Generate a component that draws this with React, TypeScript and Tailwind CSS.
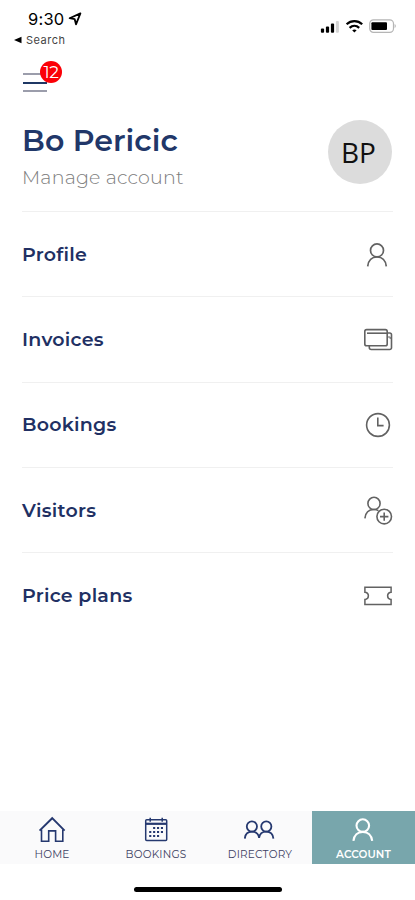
import React from 'react';
import clsx from 'clsx';

type IconProps = { className?: string };

const ProfileIcon: React.FC<IconProps> = ({ className }) => (
  <svg viewBox="0 0 30 30" fill="none" stroke="currentColor" strokeWidth="1.7" className={className}>
    <circle cx="14" cy="10.4" r="6.5" />
    <path d="M4.7 26.3C5.3 20.6 9 16.9 14 16.9s8.7 3.7 9.3 9.4" />
  </svg>
);

const InvoicesIcon: React.FC<IconProps> = ({ className }) => (
  <svg viewBox="0 0 30 30" fill="none" stroke="currentColor" strokeWidth="1.6" className={className}>
    <rect x="1.8" y="4.6" width="22.4" height="16.2" rx="1.8" />
    <path d="M4 8.2h20.2" />
    <path d="M24.3 8h2.4a1.8 1.8 0 0 1 1.8 1.8v12.9a1.8 1.8 0 0 1-1.8 1.8H8.3a2 2 0 0 1-2-2v-1.7" />
    <path d="M25 12h2.2v2" strokeWidth="1" />
  </svg>
);

const ClockIcon: React.FC<IconProps> = ({ className }) => (
  <svg viewBox="0 0 30 30" fill="none" stroke="currentColor" strokeWidth="1.6" className={className}>
    <circle cx="15" cy="15" r="11.4" />
    <path d="M14.8 7.6v8h5.8" />
  </svg>
);

const VisitorsIcon: React.FC<IconProps> = ({ className }) => (
  <svg viewBox="0 0 30 30" fill="none" stroke="currentColor" strokeWidth="1.6" className={className}>
    <circle cx="11" cy="7.4" r="6.1" />
    <path d="M1.9 22.4c.5-5.3 3.8-8.9 9.1-8.9 1.8 0 3.2.4 4.4 1.2" />
    <circle cx="21.2" cy="20.6" r="7.3" />
    <path d="M21.2 16.4v8.4M17 20.6h8.4" />
  </svg>
);

const TicketIcon: React.FC<IconProps> = ({ className }) => (
  <svg viewBox="0 0 30 30" fill="none" stroke="currentColor" strokeWidth="1.5" className={className}>
    <path d="M1.9 6.2h26.2v5.1h-.5a3.6 3.6 0 0 0 0 7.1h.5v5.1H1.9v-5.1h.5a3.6 3.6 0 0 0 0-7.1h-.5z" />
  </svg>
);

const HomeIcon: React.FC<IconProps> = ({ className }) => (
  <svg viewBox="0 0 32 28" fill="none" stroke="currentColor" strokeWidth="1.6" className={className}>
    <path d="M3.6 15.6 16.2 3.2l12.4 12.4" strokeWidth="1.9" />
    <path d="M5.5 14.4v11.9h7.2V15.9h6.9v10.4h7.2V14.4" />
  </svg>
);

const CalendarIcon: React.FC<IconProps> = ({ className }) => (
  <svg viewBox="0 0 32 28" fill="none" stroke="currentColor" strokeWidth="1.5" className={className}>
    <rect x="5.7" y="4.8" width="21" height="20.6" rx="1" />
    <path d="M5.7 8.8h21" strokeWidth="2.2" />
    <path d="M10.2 2.8v4M22.2 2.8v4" />
    <path d="M13.1 13h9.9M9.2 17h13.8M9.2 21h9.9" strokeWidth="1.9" strokeDasharray="2.1 1.8" />
  </svg>
);

const DirectoryIcon: React.FC<IconProps> = ({ className }) => (
  <svg viewBox="0 0 32 28" fill="none" stroke="currentColor" strokeWidth="1.8" className={className}>
    <circle cx="7.9" cy="11.5" r="5.1" />
    <circle cx="22.3" cy="11.5" r="5.1" />
    <path d="M.8 23.6c.4-4.3 3.1-7 7.1-7s6.7 2.7 7.2 6.2c.5-3.5 3.2-6.2 7.2-6.2s6.7 2.7 7.1 7" />
  </svg>
);

const AccountIcon: React.FC<IconProps> = ({ className }) => (
  <svg viewBox="0 0 32 28" fill="none" stroke="currentColor" strokeWidth="2.1" className={className}>
    <circle cx="14.8" cy="10.6" r="6.3" />
    <path d="M5.4 25.8c.6-5.4 4.4-8.9 9.4-8.9s8.8 3.5 9.4 8.9" />
  </svg>
);

const menuItems = [
  { label: 'Profile', icon: ProfileIcon },
  { label: 'Invoices', icon: InvoicesIcon },
  { label: 'Bookings', icon: ClockIcon },
  { label: 'Visitors', icon: VisitorsIcon },
  { label: 'Price plans', icon: TicketIcon },
];

const tabs = [
  { label: 'HOME', icon: HomeIcon },
  { label: 'BOOKINGS', icon: CalendarIcon },
  { label: 'DIRECTORY', icon: DirectoryIcon },
  { label: 'ACCOUNT', icon: AccountIcon, active: true },
];

const StatusBar: React.FC = () => (
  <div className="flex h-[50px] shrink-0 items-start justify-between pl-[14px] pr-[18px] pt-[9px] font-['Inter',sans-serif] text-black">
    <div>
      <div className="flex items-center gap-[4px] pl-[14px]">
        <span className="text-[16.5px] leading-[20px] tracking-[0.2px]">9:30</span>
        <svg viewBox="0 0 14 14" className="h-[14px] w-[14px]" fill="none" stroke="currentColor" strokeWidth="1.8" strokeLinejoin="round">
          <path d="M12.4 1.4 1.6 6.2l5.1 1 1.3 5.1z" />
        </svg>
      </div>
      <div className="flex items-center gap-[4px] pt-[1px] text-[#444]">
        <svg viewBox="0 0 8 8" className="h-2 w-2" fill="#000">
          <path d="M0 4l7.5-3.3v6.6z" />
        </svg>
        <span className="text-[11px] leading-[20px] tracking-[0.5px]">Search</span>
      </div>
    </div>
    <div className="flex items-center gap-[6px] pt-[10px]">
      <svg viewBox="0 0 20 14" className="h-[14px] w-[20px]" fill="#000">
        <rect x="1.9" y="9.5" width="3.2" height="4.2" rx="1" />
        <rect x="6.9" y="7.5" width="3.2" height="6.2" rx="1" />
        <rect x="11.9" y="4.5" width="3.2" height="9.2" rx="1" />
        <rect x="16.9" y="2" width="3" height="11.7" rx="1" fill="#d4d4d4" />
      </svg>
      <svg viewBox="0 0 18 14" className="h-[14px] w-[18px]" fill="none" stroke="#000" strokeWidth="2.2">
        <path d="M1.6 5.3c4.5-4.2 11.1-4.2 15.6 0" />
        <path d="M4.6 8.9c2.8-2.6 6.8-2.6 9.6 0" />
        <path d="M9.4 13.4 7.2 11.2c1.3-1.1 3.1-1.1 4.4 0z" fill="#000" stroke="none" />
      </svg>
      <svg viewBox="0 0 28 14" className="h-[14px] w-[28px]" fill="none">
        <rect x="0.7" y="0.8" width="23.8" height="12.6" rx="3.8" stroke="#b5b5b5" strokeWidth="1.2" />
        <rect x="2.4" y="3.2" width="15.6" height="7.8" rx="1" fill="#000" />
        <path d="M25.6 5v4c1.6-.6 1.6-3.4 0-4z" fill="#b5b5b5" />
      </svg>
    </div>
  </div>
);

const App: React.FC = () => {
  return (
    <div className="flex h-[900px] w-[415px] flex-col overflow-hidden bg-white font-['Montserrat','Inter',sans-serif]">
      <StatusBar />

      <header className="h-[161px] shrink-0 px-[22px]">
        <button className="relative ml-[1px] mt-[23px] flex h-[19px] w-[26px] flex-col justify-between" aria-label="Menu">
          <span className="h-[2px] w-[24px] bg-[#9b9dab]" />
          <span className="h-[2px] w-[24px] bg-[#1f3864]" />
          <span className="h-[2px] w-[24px] bg-[#9b9dab]" />
          <span className="absolute -top-[12px] left-[17px] flex h-[22px] w-[22px] items-center justify-center rounded-full bg-[#fb0007] text-[17px] leading-none tracking-[-0.3px] text-white">
            12
          </span>
        </button>

        <div className="mt-[28px] flex items-start justify-between pr-[1px]">
          <div className="pt-[3px]">
            <h1 className="text-[30px] leading-[36px] font-semibold tracking-[0.1px] text-[#213769]">Bo Pericic</h1>
            <p className="text-[19px] leading-[37px] font-light tracking-[0.2px] text-[#7c7c7c]">Manage account</p>
          </div>
          <div className="flex h-16 w-16 items-center justify-center rounded-full bg-[#dcdcdc] pr-[3px] pb-[1px] font-['Open_Sans',sans-serif] text-[28px] leading-none text-[#111]">
            BP
          </div>
        </div>
      </header>

      <ul className="mx-[22px] shrink-0">
        {menuItems.map(({ label, icon: Icon }) => (
          <li key={label} className="flex h-[85.3px] items-center justify-between border-t border-[#f0f0f0] pt-[1px]">
            <span className="text-[19px] leading-6 font-semibold tracking-[0.25px] text-[#213063]">{label}</span>
            <Icon className="h-[30px] w-[30px] text-[#626262]" />
          </li>
        ))}
      </ul>

      <nav className="mt-auto grid h-[53px] shrink-0 grid-cols-[104px_104px_104px_103px] bg-[#fafafb]">
        {tabs.map(({ label, icon: Icon, active }) => (
          <a
            key={label}
            className={clsx(
              'flex flex-col items-center pt-[4px]',
              active ? 'bg-[#78a6ac] text-white' : 'text-[#25386f]'
            )}
          >
            <Icon className="h-[28px] w-[32px]" />
            <span
              className={clsx(
                'mt-[5px] text-[10.5px] leading-[13px]',
                active ? 'font-semibold tracking-[0.1px]' : 'font-normal tracking-[0.2px] text-[#3c4062]'
              )}
            >
              {label}
            </span>
          </a>
        ))}
      </nav>

      <div className="flex h-[36px] shrink-0 justify-center pt-[23px]">
        <div className="h-[5px] w-[148px] rounded-full bg-black" />
      </div>
    </div>
  );
};

export default App;
